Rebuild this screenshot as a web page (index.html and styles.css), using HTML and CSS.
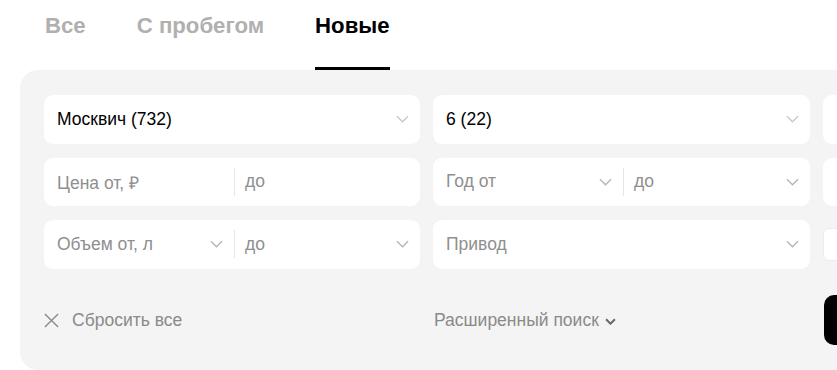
FILE: index.html
```html
<!DOCTYPE html>
<html lang="ru">
<head>
<meta charset="utf-8">
<link rel="stylesheet" href="styles.css">
</head>
<body>
<nav class="tabs">
  <a class="tab">Все</a>
  <a class="tab">С пробегом</a>
  <a class="tab active">Новые</a>
</nav>
<section class="panel">
  <div class="grid">
    <div class="field"><span class="value">Москвич (732)</span><svg class="chev light" viewBox="0 0 14 8"><path d="M1 1l6 6 6-6"/></svg></div>
    <div class="field"><span class="value">6 (22)</span><svg class="chev light" viewBox="0 0 14 8"><path d="M1 1l6 6 6-6"/></svg></div>
    <div class="field"></div>

    <div class="field range">
      <div class="part wide"><span class="ph">Цена от, ₽</span></div>
      <div class="sep"></div>
      <div class="part"><span class="ph">до</span></div>
    </div>
    <div class="field range">
      <div class="part"><span class="ph">Год от</span><svg class="chev" viewBox="0 0 14 8"><path d="M1 1l6 6 6-6"/></svg></div>
      <div class="sep"></div>
      <div class="part"><span class="ph">до</span><svg class="chev" viewBox="0 0 14 8"><path d="M1 1l6 6 6-6"/></svg></div>
    </div>
    <div class="field"></div>

    <div class="field range">
      <div class="part"><span class="ph">Объем от, л</span><svg class="chev" viewBox="0 0 14 8"><path d="M1 1l6 6 6-6"/></svg></div>
      <div class="sep"></div>
      <div class="part"><span class="ph">до</span><svg class="chev" viewBox="0 0 14 8"><path d="M1 1l6 6 6-6"/></svg></div>
    </div>
    <div class="field"><span class="ph">Привод</span><svg class="chev" viewBox="0 0 14 8"><path d="M1 1l6 6 6-6"/></svg></div>
    <div class="cell-small"><div class="small-box"></div></div>
  </div>
  <div class="footer">
    <div class="reset"><svg class="x" viewBox="0 0 16 16"><path d="M1 1l14 14M15 1L1 15"/></svg><span>Сбросить все</span></div>
    <div class="adv"><span>Расширенный поиск</span><svg class="adv-chev" viewBox="0 0 10 6"><path d="M1 1l4 4 4-4"/></svg></div>
    <div class="btn"></div>
  </div>
</section>
</body>
</html>
```
FILE: styles.css
```css
* { box-sizing: border-box; }
html, body { margin: 0; padding: 0; background: #fff; overflow: hidden; }
body { width: 837px; height: 370px; font-family: "Liberation Sans", Arial, sans-serif; }

.tabs { display: flex; height: 70px; padding-left: 45px; }
.tab {
  font-size: 22.2px; font-weight: bold; color: #b0b0b0;
  padding-top: 13px; margin-right: 51px; line-height: 26px;
  border-bottom: 3px solid transparent;
}
.tab.active { color: #000; border-bottom-color: #000; }

.panel {
  margin-left: 20px; width: 817px; height: 300px;
  background: #f4f4f4; border-radius: 18px 0 0 18px;
  padding: 25px 0 0 24px; overflow: hidden;
}
.grid {
  display: grid; grid-template-columns: 376px 377px 60px;
  column-gap: 13px; row-gap: 14px; grid-auto-rows: 48.5px;
}
.field {
  background: #fff; border-radius: 9px; display: flex; align-items: center;
  padding: 0 11px 0 13px; font-size: 17.5px;
}
.value { color: #000; flex: 1; }
.ph { color: #8f8f8f; flex: 1; }
.chev { width: 13px; height: 8px; fill: none; stroke: #b5b5b5; stroke-width: 1.4; flex: none; }
.chev.light { stroke: #c8c8c8; }
.range { padding: 0; }
.part { flex: 1; display: flex; align-items: center; height: 100%; padding: 0 11px 0 13px; }
.part + .sep + .part { padding-left: 10px; }
.range .part:first-child { flex: none; width: 190px; }
.sep { width: 1px; height: 28px; background: #e6e6e6; flex: none; }
.cell-small { display: flex; align-items: center; }
.small-box { width: 100%; height: 33px; background: #fff; border: 1px solid #ececec; border-radius: 6px; }

.footer { display: flex; align-items: center; margin-top: 26.5px; height: 50px; }
.reset { flex: none; display: flex; align-items: center; width: 390px; color: #8a8a8a; font-size: 17.5px; }
.x { width: 15px; height: 15px; fill: none; stroke: #8a8a8a; stroke-width: 1.5; margin-right: 13px; }
.adv { flex: none; display: flex; align-items: center; width: 390px; color: #8a8a8a; font-size: 17.5px; }
.adv-chev { width: 11px; height: 7px; fill: none; stroke: #666; stroke-width: 1.8; margin-left: 6px; margin-top: 2px; }
.btn { flex: none; width: 60px; height: 50px; background: #000; border-radius: 10px; }
```
